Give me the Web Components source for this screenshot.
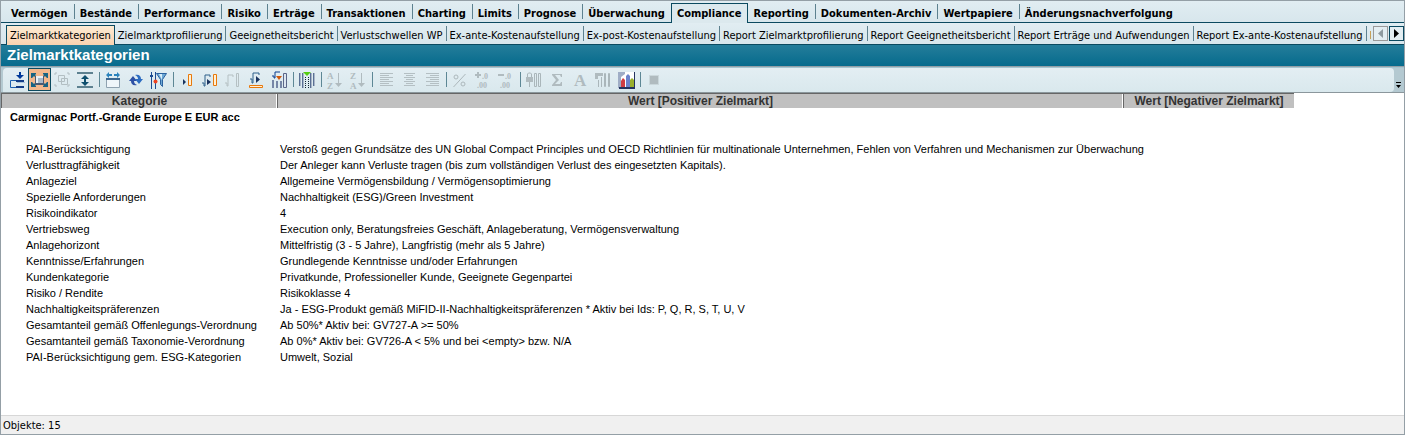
<!DOCTYPE html>
<html lang="de">
<head>
<meta charset="utf-8">
<title>Zielmarktkategorien</title>
<style>
body {
  margin: 0;
  font: 11px "DejaVu Sans Condensed", "DejaVu Sans", sans-serif;
  color: #000;
  --line: #0b4a60;
}
</style>
</head>
<body>

<app-window>
  <tab-strip slot="menu" class="main" label="Hauptmenü">
    <tab-item>Vermögen</tab-item>
    <tab-item>Bestände</tab-item>
    <tab-item>Performance</tab-item>
    <tab-item>Risiko</tab-item>
    <tab-item>Erträge</tab-item>
    <tab-item>Transaktionen</tab-item>
    <tab-item>Charting</tab-item>
    <tab-item>Limits</tab-item>
    <tab-item>Prognose</tab-item>
    <tab-item>Überwachung</tab-item>
    <tab-item active>Compliance</tab-item>
    <tab-item>Reporting</tab-item>
    <tab-item>Dokumenten-Archiv</tab-item>
    <tab-item>Wertpapiere</tab-item>
    <tab-item last>Änderungsnachverfolgung</tab-item>
  </tab-strip>
  <tab-strip slot="menu" class="sub" label="Compliance" scroll>
    <tab-item active>Zielmarktkategorien</tab-item>
    <tab-item>Zielmarktprofilierung</tab-item>
    <tab-item>Geeignetheitsbericht</tab-item>
    <tab-item>Verlustschwellen WP</tab-item>
    <tab-item>Ex-ante-Kostenaufstellung</tab-item>
    <tab-item>Ex-post-Kostenaufstellung</tab-item>
    <tab-item>Report Zielmarktprofilierung</tab-item>
    <tab-item>Report Geeignetheitsbericht</tab-item>
    <tab-item>Report Erträge und Aufwendungen</tab-item>
    <tab-item>Report Ex-ante-Kostenaufstellung</tab-item>
    <tab-item last>R</tab-item>
  </tab-strip>
  <span slot="title">Zielmarktkategorien</span>
  <tool-bar slot="tools"></tool-bar>
  <category-table></category-table>
  <span slot="status">Objekte: 15</span>
</app-window>

<script>
class AppWindow extends HTMLElement {
  constructor() {
    super();
    this.attachShadow({ mode: "open" }).innerHTML = `
<style>
:host {
  display: flex;
  flex-direction: column;
  box-sizing: border-box;
  min-height: 100vh;
  border: 1px solid #949fa6;
  background: #fff;
}
h1 {
  margin: 0;
  padding: 0 6px 1px;
  font: bold 15px/20px "Liberation Sans", Arial, sans-serif;
  color: #fff;
  background: linear-gradient(#247d9a, #066b8d);
  border-bottom: 1px solid #939fa7;
}
main {
  flex: 1;
  overflow: hidden;
}
footer {
  padding: 2px 2px 0;
  line-height: 16px;
  background: #f0f0f0;
  border-top: 1px solid #d7d7d7;
}
</style>
<slot name="menu"></slot>
<h1><slot name="title"></slot></h1>
<slot name="tools"></slot>
<main><slot></slot></main>
<footer><slot name="status"></slot></footer>`;
  }
}

class TabStrip extends HTMLElement {
  constructor() {
    super();
    this.attachShadow({ mode: "open" }).innerHTML = `
<style>
:host {
  display: flex;
  height: 22px;
  background: linear-gradient(#e1edf2, #d7e6ec);
  box-shadow: inset 0 -1px var(--line);
}
:host(.main) { font-weight: bold; --pad: 0 6px 0 5px; --face: #dce9ee; }
:host(.sub) { --pad: 0 3px; --face: linear-gradient(#fdecd4, #fad2b0); }
nav {
  flex: 1;
  min-width: 0;
  display: flex;
  padding-left: 5px;
  overflow: hidden;
}
:host(.sub) nav { padding-left: 6px; }
.scroll {
  display: none;
  gap: 1px;
  padding: 3px 0 0 2px;
}
:host([scroll]) .scroll { display: flex; }
button {
  box-sizing: border-box;
  width: 15px;
  height: 15px;
  padding: 0;
  border: 1px solid var(--line);
  background: #e4eef2;
  display: grid;
  place-items: center;
}
button:disabled { border-color: #999; }
svg { display: block; fill: #000; }
button:disabled svg { fill: #8f9a9f; }
</style>
<nav><slot></slot></nav>
<div class="scroll">
  <button disabled aria-label="Zurück"><svg width="5" height="9"><path d="M5 0v9L0 4.500z"/></svg></button>
  <button aria-label="Weiter"><svg width="5" height="9"><path d="M0 0v9L5 4.500z"/></svg></button>
</div>`;
  }
  connectedCallback() {
    this.shadowRoot.querySelector("nav").setAttribute("aria-label", this.getAttribute("label"));
  }
}

class TabItem extends HTMLElement {
  constructor() {
    super();
    this.attachShadow({ mode: "open" }).innerHTML = `
<style>
:host {
  display: flex;
  flex: none;
}
a {
  margin-top: 5px;
  padding: var(--pad);
  line-height: 16px;
  white-space: nowrap;
  color: inherit;
  text-decoration: none;
}
i {
  width: 1px;
  height: 15px;
  margin-top: 3px;
  background: #5d818f;
}
:host([last]) i { display: none; }
:host([active]) {
  box-sizing: border-box;
  margin: 2px 0 0 -1px;
  border: solid var(--line);
  border-width: 1px 1px 0;
  background: var(--face);
}
:host([active]) i { display: none; }
:host([active]) a { margin-top: 2px; }
</style>
<a href="#"><slot></slot></a><i></i>`;
  }
}

// every glyph sits on a 23 x 22 grid; "-" is a divider
const root = (c) => `<path d="M3 14h2v3h1V6h5v2" fill="none" stroke="${c}"/>`;
const lines = (rows) => `<path d="${rows.map(([x, w], i) => `M${x} ${4 + i * 2}h${w}v1h-${w}z`).join("")}" fill="#b4bfc3"/>`;
const icons = [
  ["Export", `<path d="M14 3h2v3h3l-4 4-4-4h3z" fill="#00399a"/><path d="M12.500 11.500h-7v7h6" fill="none" stroke="#1d5fae"/><path d="M11 11h8v2h-8zM11 17h8v2h-8z" fill="#123c86"/><path d="M12 13h8v1h-8z" fill="#a9c3dc"/>`],
  ["Anpassen", `<path d="M3 4h5v1L7 6l2 2-1 1-2-2-2 2H3zM20 4h-5v1l1 1-2 2 1 1 2-2 2 2h1zM3 18h5v-1l-1-1 2-2-1-1-2 2-2-2H3zM20 18h-5v-1l1-1-2-2 1-1 2 2 2-2h1z" fill="#176384"/><path d="M7 7h9v9H7z" fill="#4c5a72"/><path d="M8 7h7v7H8z" fill="#e9eff5"/><path d="M10 9h5v5h-5z" fill="#aab9c9"/>`, "on"],
  ["Gruppieren", `<path d="M7.500 6.500h6v6h-6zM10.500 9.500h6v6h-6z" fill="none" stroke="#b2bec2"/><path d="M4 6V4h2M16 4h2v2M4 15v2h2M18 15v2h-2" fill="none" stroke="#b2bec2"/>`],
  ["Zeilenhöhe", `<path d="M3 3h16v2H3zM3 17h16v2H3z" fill="#5d8190"/><path d="M11 6l4 4h-3v3h3l-4 4-4-4h3v-3H7z" fill="#0e4f6e"/>`],
  "-",
  ["Spaltenbreite", `<path d="M4 6l3-3v2h3v2H7v2zM18 6l-3-3v2h-3v2h3v2z" fill="#2b83bd"/><path d="M4.500 10.500h13v8h-13z" fill="#eff6fa" stroke="#8fa2b0"/><path d="M4 9h14v2H4z" fill="#3b6790"/>`],
  ["Aktualisieren", `<path d="M4 12l4-5 4 5h-3c0 2 1 3 3 4-4 1-6-1-6-4z" fill="#2c50a5"/><path d="M18 10l-4 5-4-5h3c0-2-1-3-3-4 4-1 6 1 6 4z" fill="#2c6cc1"/>`],
  ["Filter", `<path d="M3.500 3v17M7.500 3v17" stroke="#1d4b90"/><path d="M2 6h3v2H2z" fill="#1d4b90"/><circle cx="7.500" cy="12.500" r="2" fill="#ee4422"/><path d="M8.500 4.500h10l-4 6v7l-2-2v-5z" fill="#6da8d5" stroke="#2c629f"/><path d="M11 5h3v6z" fill="#d9eefa"/>`],
  "-",
  ["Zeile", `<path d="M7 10l3 3-3 3z" fill="#19335f"/><path d="M12.500 5.500h3v11h-3z" fill="#fff0d5" stroke="#e8790c"/>`],
  ["Formel", root("#2f608b") + `<path d="M8 10l4 3-4 3z" fill="#19335f"/><path d="M14.500 5.500h3v11h-3z" fill="#fff0d5" stroke="#e8790c"/>`],
  ["Formel löschen", root("#b5c0c3") + `<path d="M14.500 4.500h2v13h-2z" fill="none" stroke="#b5c0c3"/>`],
  ["Summenzeile", `<path d="M5 10h2v4h1V4h6v2" fill="none" stroke="#2f608b"/><path d="M11 7l4 3.500-4 3.500z" fill="#19335f"/><path d="M4.500 16.500h13v2h-13z" fill="#fff0d5" stroke="#e8790c"/>`],
  ["Summenspalte", `<path d="M4 7h2v2h1V3h5" fill="none" stroke="#0b3f8f"/><path d="M5 11v8M9 12v7M13 12v7" stroke="#7686a6" stroke-width="2"/><path d="M15.500 4.500h3v14h-3z" fill="#dce6f0" stroke="#5b6688"/><path d="M8 7h6l-3 4z" fill="#d0580c"/>`],
  "-",
  ["Spalten", `<path d="M3.500 4v13M6.500 4v15M14.500 4v15M17.500 4v13" stroke="#5a7094"/><path d="M4.500 4v13M7.500 4v15M15.500 4v15M18.500 4v13" stroke="#a9b6c9"/><path d="M9.500 8v11M12.500 8v11" stroke="#123" stroke-dasharray="1 1"/><path d="M7 3h8l-4 4z" fill="#55cc11"/>`],
  "-",
  ["Aufsteigend", `<text x="3" y="10">A</text><text x="3" y="20">Z</text><path d="M14 4h1v10h3l-3.500 4-3.500-4h3z"/>`, "off"],
  ["Absteigend", `<text x="3" y="10">Z</text><text x="3" y="20">A</text><path d="M14 4h1v10h3l-3.500 4-3.500-4h3z"/>`, "off"],
  "-",
  ["Linksbündig", lines([[5, 13], [5, 9], [5, 13], [5, 9], [5, 13], [5, 9], [5, 13]])],
  ["Zentriert", lines([[6, 11], [8, 7], [6, 11], [8, 7], [6, 11], [8, 7], [6, 11]])],
  ["Rechtsbündig", lines([[5, 13], [9, 9], [5, 13], [9, 9], [5, 13], [9, 9], [5, 13]])],
  "-",
  ["Prozent", `<circle cx="7" cy="8" r="2" fill="none" stroke="#adb8bc"/><circle cx="14" cy="15" r="2" fill="none" stroke="#adb8bc"/><path d="M16.500 5l-12 13" stroke="#adb8bc"/>`, "off"],
  ["Mehr Dezimalstellen", `<path d="M5 3h2v2h2v2H7v2H5V7H3V5h2z"/><text x="10" y="10" class="num">.0</text><text x="5" y="19" class="num">.00</text>`, "off"],
  ["Weniger Dezimalstellen", `<path d="M3 5h6v2H3z"/><text x="10" y="10" class="num">.0</text><text x="5" y="19" class="num">.00</text>`, "off"],
  "-",
  ["Sperren", `<path d="M3 8h7v5H3z"/><path d="M4.500 8V5l1-1h2l1 1v3M6.500 13v5M11.500 4.500h2v13h-2zM15.500 4.500h2v13h-2z" fill="none" stroke="#aab6ba"/>`, "off"],
  ["Summe", `<path d="M6 5h10v3h-1l-1-2H9l4 5-4 4h5l1-2h1v4H6v-1l4-5-4-5z"/>`, "off"],
  ["Schrift", `<text x="5" y="17" class="big">A</text>`, "off"],
  ["Fixieren", `<path d="M3 4h8v3H3zM3 7h3v3H3z"/><path d="M9.500 8v10M6.500 11v7M12.500 4.500h1v13h-1zM16.500 4.500h1v13h-1z" fill="none" stroke="#aab6ba"/>`, "off"],
  ["Diagramm", `<path d="M4 3h16v17H4z" fill="#24335f"/><path d="M3 3h16v16H3z" fill="#9fadc6"/><path d="M6 18V8l4-3V3h9v15z" fill="#fff"/><path d="M6 18v-6l2-3 2 2v7z" fill="#cf3d43"/><path d="M11 18V7l2-2 2 2v11z" fill="#6b83cc"/><path d="M15 18v-7l2-2 2 2v7z" fill="#9aaf2c"/><path d="M4 18h15v2H4z" fill="#24335f"/>`],
  "-",
  ["Stopp", `<path d="M6 6h10v10H6z" opacity=".4"/><path d="M7 7h8v8H7z"/>`, "off"],
];

class ToolBar extends HTMLElement {
  constructor() {
    super();
    this.attachShadow({ mode: "open" }).innerHTML = `
<style>
:host {
  display: flex;
  height: 24px;
  background: #b4c9d1;
  border-bottom: 1px solid #8b979c;
  border-top: 1px solid #a5c5d0;
}
.tools {
  flex: 1;
  display: flex;
  padding-left: 2px;
  margin-left: 2px;
  background: linear-gradient(#e3eef3, #d9e8ed);
  border-radius: 4px 4px 4px 0;
}
button {
  box-sizing: border-box;
  width: 23px;
  height: 23px;
  padding: 0;
  border: 0;
  background: none;
}
.on {
  background: #f3b78d;
  box-shadow: inset 0 0 0 1px var(--line);
}
.off { fill: #b0bbbf; }
svg { display: block; }
text { font: bold 9px "Liberation Serif", serif; }
.num { font: bold 8px "Liberation Serif", serif; }
.big { font: bold 17px "Liberation Serif", serif; }
i {
  width: 1px;
  height: 15px;
  margin: 4px 2px 0;
  background: #5d8795;
}
.more {
  width: 10px;
  height: auto;
  display: grid;
  place-items: end center;
  padding-bottom: 3px;
}
</style>
<div class="tools">${icons.map((icon) => icon === "-" ? "<i></i>" : `
  <button class="${icon[2] || ""}" aria-label="${icon[0]}"><svg width="23" height="22">${icon[1]}</svg></button>`).join("")}
</div>
<button class="more" aria-label="Weitere"><svg width="6" height="7"><path d="M0 0h5v1H0zM0 3h5L2.500 6z"/></svg></button>`;
  }
}

const rows = [
  ["PAI-Berücksichtigung", "Verstoß gegen Grundsätze des UN Global Compact Principles und OECD Richtlinien für multinationale Unternehmen, Fehlen von Verfahren und Mechanismen zur Überwachung"],
  ["Verlusttragfähigkeit", "Der Anleger kann Verluste tragen (bis zum vollständigen Verlust des eingesetzten Kapitals)."],
  ["Anlageziel", "Allgemeine Vermögensbildung / Vermögensoptimierung"],
  ["Spezielle Anforderungen", "Nachhaltigkeit (ESG)/Green Investment"],
  ["Risikoindikator", "4"],
  ["Vertriebsweg", "Execution only, Beratungsfreies Geschäft, Anlageberatung, Vermögensverwaltung"],
  ["Anlagehorizont", "Mittelfristig (3 - 5 Jahre), Langfristig (mehr als 5 Jahre)"],
  ["Kenntnisse/Erfahrungen", "Grundlegende Kenntnisse und/oder Erfahrungen"],
  ["Kundenkategorie", "Privatkunde, Professioneller Kunde, Geeignete Gegenpartei"],
  ["Risiko / Rendite", "Risikoklasse 4"],
  ["Nachhaltigkeitspräferenzen", "Ja - ESG-Produkt gemäß MiFID-II-Nachhaltigkeitspräferenzen * Aktiv bei Ids: P, Q, R, S, T, U, V"],
  ["Gesamtanteil gemäß Offenlegungs-Verordnung", "Ab 50%* Aktiv bei: GV727-A >= 50%"],
  ["Gesamtanteil gemäß Taxonomie-Verordnung", "Ab 0%* Aktiv bei: GV726-A < 5% und bei <empty> bzw. N/A"],
  ["PAI-Berücksichtigung gem. ESG-Kategorien", "Umwelt, Sozial"],
];

class CategoryTable extends HTMLElement {
  constructor() {
    super();
    this.attachShadow({ mode: "open" }).innerHTML = `
<style>
:host {
  display: block;
  font-family: "Liberation Sans", Arial, sans-serif;
}
table {
  width: 1293px;
  table-layout: fixed;
  border-collapse: separate;
  border-spacing: 0;
}
.name { width: 276px; }
.negative { width: 171px; }
th, td {
  padding: 0;
  line-height: 16px;
  text-align: left;
  font-weight: normal;
  white-space: nowrap;
}
thead th {
  line-height: 14px;
  font-size: 12px;
  font-weight: bold;
  text-align: center;
  color: #333;
  background: #c0c0c0;
  border: solid #666;
  border-width: 1px 0 0 1px;
}
thead th:not(:last-child) { box-shadow: inset -1px 0 #fff; }
.group th {
  padding: 1px 0 16px 9px;
  font-weight: bold;
}
tbody th { padding-left: 25px; }
td { padding-left: 3px; }
</style>
<table>
  <colgroup><col class="name"><col><col class="negative"></colgroup>
  <thead><tr><th>Kategorie</th><th>Wert [Positiver Zielmarkt]</th><th>Wert [Negativer Zielmarkt]</th></tr></thead>
  <tbody><tr class="group"><th colspan="3">Carmignac Portf.-Grande Europe E EUR acc</th></tr></tbody>
</table>`;
    const body = this.shadowRoot.querySelector("tbody");
    for (const [name, value] of rows) {
      const tr = body.insertRow();
      const th = document.createElement("th");
      th.scope = "row";
      th.textContent = name;
      tr.append(th);
      tr.insertCell().textContent = value;
      tr.insertCell();
    }
  }
}

customElements.define("app-window", AppWindow);
customElements.define("tab-strip", TabStrip);
customElements.define("tab-item", TabItem);
customElements.define("tool-bar", ToolBar);
customElements.define("category-table", CategoryTable);
</script>
</body>
</html>
